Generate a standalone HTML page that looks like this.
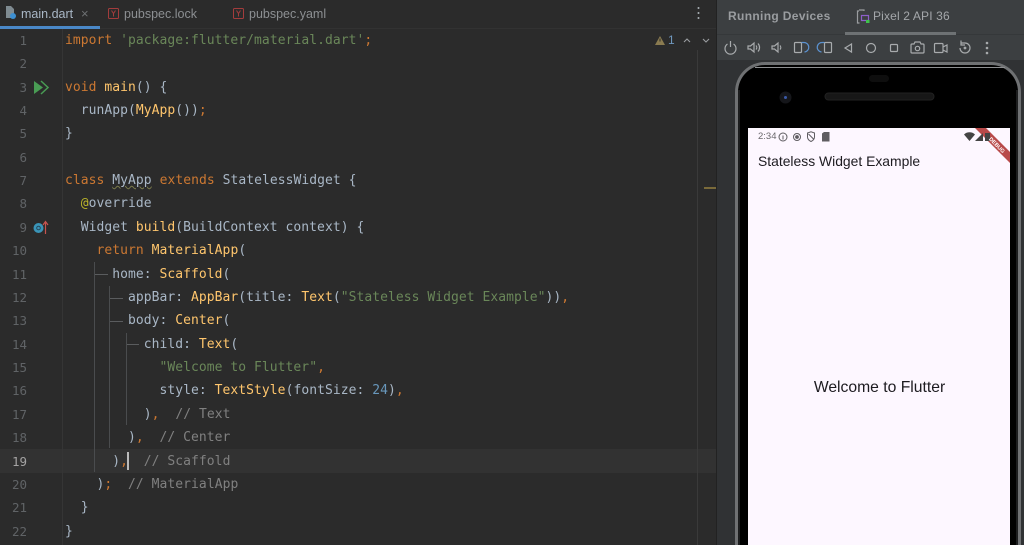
<!DOCTYPE html>
<html><head><meta charset="utf-8"><style>
html,body{margin:0;padding:0;background:#2b2b2b;overflow:hidden;width:1024px;height:545px}
#r{position:relative;width:1024px;height:545px;overflow:hidden;background:#2b2b2b;font-family:"Liberation Sans",sans-serif;filter:blur(.35px)}
.a{position:absolute}
.l{position:absolute;left:65px;height:23px;font:13px/23px "DejaVu Sans Mono",monospace;letter-spacing:.05px;color:#a9b7c6;white-space:pre}
.n{position:absolute;left:0;width:27px;text-align:right;font:12.5px/23px "DejaVu Sans Mono",monospace;color:#606366}
.k{color:#cc7832}.f{color:#ffc66d}.s{color:#6a8759}.c{color:#808080}.d{color:#6897bb}.y{color:#bbb529}
.t{position:absolute;top:6px;font-size:12.5px;line-height:16px;color:#8c8f92}
.g{position:absolute;background:#4a4c4e}
.ic{position:absolute;left:0;top:0}
</style></head><body><div id="r">

<div class="a" style="left:0;top:26px;width:100px;height:3px;background:#4a88c7"></div>
<div class="a" style="left:100px;top:28px;width:616px;height:1px;background:#323232"></div>
<div class="t" style="left:21px;color:#a9b7c6">main.dart</div>
<div class="t" style="left:81px;color:#6e7173;font-size:13px">×</div>
<div class="t" style="left:124px">pubspec.lock</div>
<div class="t" style="left:249px">pubspec.yaml</div>
<svg class="ic" width="716" height="60" fill="none">
<path d="M6 6h5l3 3v4l-3 3v2H6z" fill="#7f8b91"/><circle cx="13" cy="16" r="3" fill="#3d8fd1"/>
<rect x="108.500" y="8.500" width="10" height="10" rx="1" stroke="#a33c3c"/><path d="M111.500 10.500l2 3 2-3M113.500 13.500v3" stroke="#a33c3c"/>
<rect x="233.500" y="8.500" width="10" height="10" rx="1" stroke="#a33c3c"/><path d="M236.500 10.500l2 3 2-3M238.500 13.500v3" stroke="#a33c3c"/>
<circle cx="698.500" cy="8" r="1" fill="#a9b0b5"/><circle cx="698.500" cy="13" r="1" fill="#a9b0b5"/><circle cx="698.500" cy="18" r="1" fill="#a9b0b5"/>
<path d="M655 45l5-9 5 9z" fill="#8a7b50"/><rect x="659.500" y="38.500" width="1" height="3" fill="#2b2b2b"/>
<path d="M684 42l3-3 3 3M703 39l3 3 3-3" stroke="#9a9da0" stroke-width="1.100"/>
</svg>
<div class="a" style="left:668px;top:33px;font-size:12px;line-height:14px;color:#6f97bd">1</div>

<div class="a" style="left:0;top:449px;width:716px;height:24px;background:#323232"></div>
<div class="a" style="left:62px;top:29px;width:1px;height:516px;background:#353535"></div>
<div class="a" style="left:697px;top:50px;width:1px;height:495px;background:#3a3a3a"></div>
<div class="a" style="left:704px;top:187px;width:12px;height:2px;background:#7a6a3a"></div>
<div class="a" style="left:716px;top:0;width:1px;height:545px;background:#222"></div>

<div class="g" style="left:94px;top:262px;width:1px;height:210px"></div>
<div class="g" style="left:95px;top:274px;width:13px;height:1px;background:#5a5c5e"></div>
<div class="g" style="left:109px;top:286px;width:1px;height:162px"></div>
<div class="g" style="left:110px;top:298px;width:13px;height:1px;background:#5a5c5e"></div>
<div class="g" style="left:110px;top:321px;width:13px;height:1px;background:#5a5c5e"></div>
<div class="g" style="left:126px;top:333px;width:1px;height:92px"></div>
<div class="g" style="left:127px;top:344px;width:12px;height:1px;background:#5a5c5e"></div>

<div class="n" style="top:29px">1</div>
<div class="n" style="top:52px">2</div>
<div class="n" style="top:76px">3</div>
<div class="n" style="top:99px">4</div>
<div class="n" style="top:122px">5</div>
<div class="n" style="top:146px">6</div>
<div class="n" style="top:169px">7</div>
<div class="n" style="top:192px">8</div>
<div class="n" style="top:216px">9</div>
<div class="n" style="top:239px">10</div>
<div class="n" style="top:263px">11</div>
<div class="n" style="top:286px">12</div>
<div class="n" style="top:309px">13</div>
<div class="n" style="top:333px">14</div>
<div class="n" style="top:356px">15</div>
<div class="n" style="top:379px">16</div>
<div class="n" style="top:403px">17</div>
<div class="n" style="top:426px">18</div>
<div class="n" style="top:450px;color:#a4a3a3">19</div>
<div class="n" style="top:473px">20</div>
<div class="n" style="top:496px">21</div>
<div class="n" style="top:520px">22</div>

<svg class="ic" width="62" height="240" fill="none">
<path d="M34 81v13l9-6.500z" fill="#499c54"/><path d="M41 81l7 6.500-7 6.500" stroke="#499c54" stroke-width="1.500"/>
<circle cx="38.500" cy="228" r="5" fill="#3a95b8"/><circle cx="38.500" cy="228" r="1.800" stroke="#25475a"/>
<path d="M45.500 234v-12M43 225l2.500-3.500 2.500 3.500" stroke="#c75450" stroke-width="1.200"/>
</svg>

<div class="l" style="top:29px"><span class="k">import</span> <span class="s">'package:flutter/material.dart'</span><span class="k">;</span></div>
<div class="l" style="top:76px"><span class="k">void</span> <span class="f">main</span>() {</div>
<div class="l" style="top:99px">  runApp(<span class="f">MyApp</span>())<span class="k">;</span></div>
<div class="l" style="top:122px">}</div>
<div class="l" style="top:169px"><span class="k">class</span> <span style="text-decoration:underline wavy #7a7a4a 1px">MyApp</span> <span class="k">extends</span> StatelessWidget {</div>
<div class="l" style="top:192px">  <span class="y">@</span>override</div>
<div class="l" style="top:216px">  Widget <span class="f">build</span>(BuildContext context) {</div>
<div class="l" style="top:239px">    <span class="k">return</span> <span class="f">MaterialApp</span>(</div>
<div class="l" style="top:263px">      home: <span class="f">Scaffold</span>(</div>
<div class="l" style="top:286px">        appBar: <span class="f">AppBar</span>(title: <span class="f">Text</span>(<span class="s">"Stateless Widget Example"</span>))<span class="k">,</span></div>
<div class="l" style="top:309px">        body: <span class="f">Center</span>(</div>
<div class="l" style="top:333px">          child: <span class="f">Text</span>(</div>
<div class="l" style="top:356px">            <span class="s">"Welcome to Flutter"</span><span class="k">,</span></div>
<div class="l" style="top:379px">            style: <span class="f">TextStyle</span>(fontSize: <span class="d">24</span>)<span class="k">,</span></div>
<div class="l" style="top:403px">          )<span class="k">,</span>  <span class="c">// Text</span></div>
<div class="l" style="top:426px">        )<span class="k">,</span>  <span class="c">// Center</span></div>
<div class="l" style="top:450px">      )<span class="k">,</span>  <span class="c">// Scaffold</span></div>
<div class="l" style="top:473px">    )<span class="k">;</span>  <span class="c">// MaterialApp</span></div>
<div class="l" style="top:496px">  }</div>
<div class="l" style="top:520px">}</div>
<div class="a" style="left:127px;top:452px;width:1.500px;height:18px;background:#bbb"></div>

<!-- right panel -->
<div class="a" style="left:717px;top:0;width:307px;height:60px;background:#3c3f41"></div>
<div class="a" style="left:717px;top:34px;width:307px;height:1px;background:#35383a"></div>
<div class="a" style="left:717px;top:60px;width:307px;height:485px;background:#303234"></div>
<div class="a" style="left:845px;top:32px;width:111px;height:3px;background:#6e7274"></div>
<div class="a" style="left:728px;top:8px;font-size:12px;font-weight:bold;line-height:16px;letter-spacing:.35px;color:#9a9da0;white-space:nowrap">Running Devices</div>
<div class="a" style="left:873px;top:8px;font-size:12px;line-height:16px;letter-spacing:.15px;color:#a4a7aa;white-space:nowrap">Pixel 2 API 36</div>

<svg class="ic" width="1024" height="60" fill="none" stroke="#a8abad" stroke-width="1.200">
<path d="M859 11h-1.500v12h2M864 11v-1h-5" stroke="#9a9da0"/><rect x="861.500" y="15.500" width="7" height="5" stroke="#8d5fc9"/><rect x="866" y="20" width="3.500" height="3" fill="#3fc24c" stroke="none"/>
<path d="M727.500 44a5.500 5.500 0 1 0 6 0M730.500 41v6"/>
<path d="M748 46h2.500l3.500-3v9l-3.500-3H748zM756 45.500a3 3 0 0 1 0 4M758 43.500a6 6 0 0 1 0 8"/>
<path d="M772 46h2.500l3.500-3v9l-3.500-3H772zM780 45.500a3 3 0 0 1 0 4"/>
<rect x="794.500" y="42.500" width="7" height="10" rx="1"/><path d="M801.500 42.500h2a4 4 0 0 1 1 9.500" stroke="#5b92d1"/>
<rect x="824.500" y="42.500" width="7" height="10" rx="1"/><path d="M824.500 42.500h-2a4 4 0 0 0-1 9.500" stroke="#5b92d1"/>
<path d="M851.500 44l-6.500 4 6.500 4z"/>
<circle cx="871" cy="48" r="4.500"/>
<rect x="890.500" y="44.500" width="7" height="7" rx="1"/>
<path d="M912 44h2l1-2h5l1 2h2a1 1 0 0 1 1 1v7a1 1 0 0 1-1 1h-11a1 1 0 0 1-1-1v-7a1 1 0 0 1 1-1z"/><circle cx="917.500" cy="48.500" r="2.200"/>
<rect x="934.500" y="43.500" width="8.500" height="9" rx="1"/><path d="M943 47l4-2v7l-4-2"/>
<path d="M961 43h4a5 5 0 1 1-5 5M961 40.500v4.500h4"/><circle cx="965" cy="48" r=".8"/>
<circle cx="987" cy="43" r=".7"/><circle cx="987" cy="48" r=".7"/><circle cx="987" cy="53" r=".7"/>
</svg>

<!-- phone -->
<div class="a" style="left:735px;top:62px;width:286px;height:483px;box-sizing:border-box;border:3px solid #6f7173;border-bottom:0;border-radius:30px 30px 0 0;background:#000"></div>
<div class="a" style="left:738px;top:90px;width:2px;height:455px;background:#1c1d1e"></div>
<div class="a" style="left:1016px;top:90px;width:2px;height:455px;background:#1c1d1e"></div>
<div class="a" style="left:755px;top:67px;width:250px;height:1px;background:#8d8f91"></div>
<svg class="ic" width="1024" height="130" fill="none">
<rect x="869" y="75" width="20" height="7" rx="3.500" fill="#0e0e0e"/>
<rect x="825" y="93" width="109" height="7" rx="3.500" fill="#171717" stroke="#222"/>
<circle cx="785.500" cy="97.500" r="6" fill="#15161a"/><circle cx="785.500" cy="97.500" r="1.500" fill="#3b5aa8"/>
</svg>
<div class="a" style="left:748px;top:128px;width:262px;height:417px;background:#fdf7ff;overflow:hidden">
<div class="a" style="left:10px;top:2px;font-size:9.500px;line-height:13px;color:#6a686c">2:34</div>
<svg class="ic" width="262" height="60" fill="none" stroke="#5f5d61" stroke-width="1">
<circle cx="35" cy="9" r="4"/><path d="M35 7.500v4"/>
<circle cx="49" cy="9" r="3.500"/><circle cx="49" cy="9" r="1.400" fill="#5f5d61"/>
<path d="M59.500 5l3.500-1.200 3.500 1.200v4c0 2-1.500 3.500-3.500 4.500-2-1-3.500-2.500-3.500-4.500zM60.500 6l5.500 5.500"/>
<path d="M74 5.500l2-1.500h5.500v9.500H74z" fill="#5f5d61" stroke="none"/>
</svg>
<svg class="ic" width="262" height="60">
<path d="M227 0h11l24 24v11z" fill="#b84a4a"/>
<path d="M216 6.500a8 8 0 0 1 11 0l-5.500 6.500z" fill="#444"/>
<path d="M235 5v8h-8z" fill="#444"/>
<rect x="237" y="5" width="5" height="8" fill="#444"/>
<text x="0" y="0" transform="translate(247.600 18.400) rotate(45)" font-family="Liberation Sans" font-size="5.500" font-weight="bold" fill="#fff" text-anchor="middle">DEBUG</text>
</svg>
<div class="a" style="left:10px;top:23px;font-size:13.900px;line-height:20px;color:#1d1b20;white-space:nowrap">Stateless Widget Example</div>
<div class="a" style="left:0;width:263px;top:248.500px;text-align:center;font-size:15.700px;line-height:22px;color:#1d1b20;white-space:nowrap">Welcome to Flutter</div>
</div>

</div></body></html>
